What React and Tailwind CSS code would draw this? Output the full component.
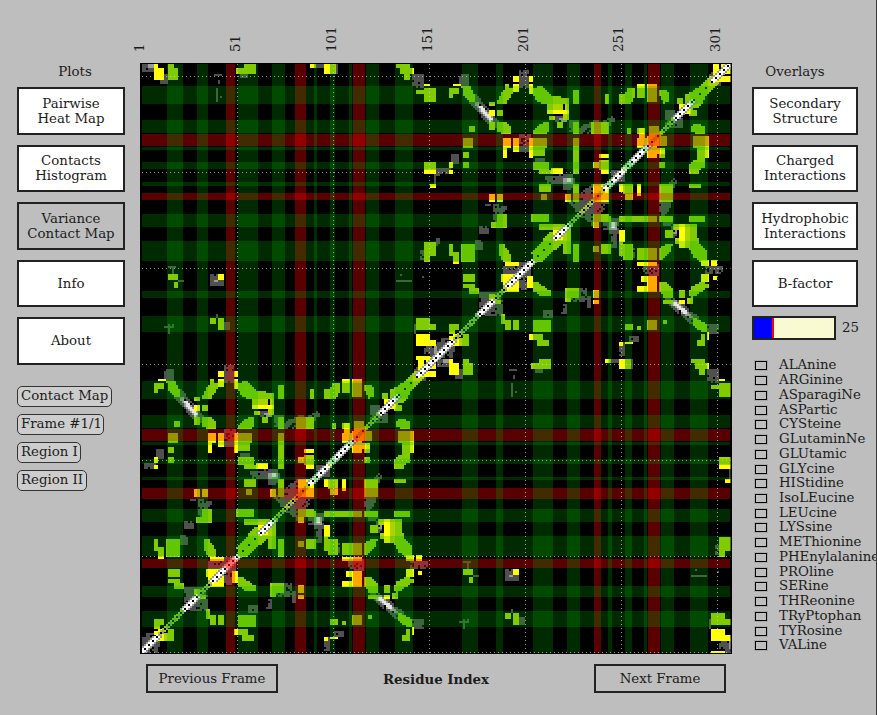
import React from "react";

const CELL = 6;
const G = "#aad400", Y = "#ffff00", D = "#505050", L = "#9a9a9a", W = "#e4e4e4";

function hash(i, j) {
  const s = Math.sin(i * 12.9898 + j * 78.233) * 43758.5453;
  return s - Math.floor(s);
}
function inside(pts, x, y) {
  let c = false;
  for (let a = 0, b = pts.length - 2; a < pts.length; b = a, a += 2) {
    const xa = pts[a], ya = pts[a + 1], xb = pts[b], yb = pts[b + 1];
    if (ya > y !== yb > y && x < ((xb - xa) * (y - ya)) / (yb - ya) + xa) c = !c;
  }
  return c;
}
const rectPts = (r) => [r[0], r[1], r[2], r[1], r[2], r[3], r[0], r[3]];
const mirrorPts = (p) => {
  const o = [];
  for (let i = 0; i < p.length; i += 2) o.push(897 - p[i + 1], 897 - p[i]);
  return o;
};
function addShape(d, pts, speckle) {
  let x0 = 1e9, y0 = 1e9, x1 = -1e9, y1 = -1e9;
  for (let i = 0; i < pts.length; i += 2) {
    x0 = Math.min(x0, pts[i]); x1 = Math.max(x1, pts[i]);
    y0 = Math.min(y0, pts[i + 1]); y1 = Math.max(y1, pts[i + 1]);
  }
  for (let i = Math.floor(x0 / CELL); i <= x1 / CELL; i++) {
    for (let j = Math.floor(y0 / CELL); j <= y1 / CELL; j++) {
      if (!inside(pts, i * CELL + 3, j * CELL + 3)) continue;
      if (speckle && hash(i, j) < speckle) continue;
      d.push(`M${i * CELL} ${j * CELL}h${CELL}v${CELL}h-${CELL}z`);
    }
  }
}
function build(layers, mirror) {
  return layers.map(([color, shapes, speckle]) => {
    const d = [];
    shapes.forEach((s) => {
      const pts = s.length === 4 ? rectPts(s) : s;
      addShape(d, pts, speckle);
      if (mirror) addShape(d, mirrorPts(pts), speckle);
    });
    return { color, d: d.join("") };
  });
}

const mainLayers = build(
  [
    [D, [
      [75, 45, 105, 80], [105, 105, 125, 105, 190, 180, 190, 205, 170, 205, 105, 130],
      [255, 30, 280, 85], [250, 225, 290, 262], [255, 262, 280, 275], [10, 325, 50, 345], [50, 285, 70, 315],
      [300, 295, 330, 305], [330, 350, 380, 370], [375, 345, 415, 372], [360, 168, 402, 186],
      [420, 220, 445, 195, 480, 180, 500, 185, 530, 170, 545, 180, 520, 200, 470, 225],
      [150, 430, 190, 440], [172, 440, 215, 500], [135, 500, 165, 520], [120, 540, 145, 570],
      [400, 425, 440, 398, 470, 372, 500, 395, 490, 420, 440, 475], [530, 330, 568, 368],
      [205, 618, 250, 640], [215, 612, 290, 660], [130, 695, 175, 745], [160, 700, 200, 725],
      [690, 175, 745, 205], [820, 40, 860, 70], [385, 345, 420, 390], [400, 180, 430, 215],
      [5, 845, 40, 880], [20, 835, 45, 850],
    ], 0.1],
    [L, [[120, 125, 130, 125, 175, 175, 175, 190, 165, 190, 120, 135], [385, 352, 412, 372], [375, 172, 400, 184]], 0.1],
    [W, [[130, 140, 142, 140, 174, 178, 165, 184], [395, 356, 410, 368]], 0],
    [G, [
      [40, 85, 75, 85, 75, 100, 55, 100, 55, 112, 40, 112],
      [80, 80, 105, 80, 120, 110, 120, 125, 105, 125, 85, 105],
      [165, 125, 180, 140], [185, 148, 205, 166],
      [232, 85, 232, 100, 215, 130, 190, 135, 185, 125, 205, 90], [212, 72, 225, 100],
      [290, 85, 318, 78, 350, 105, 385, 112, 385, 135, 335, 135, 310, 125, 292, 105],
      [385, 112, 402, 135], [412, 88, 430, 135], [388, 135, 402, 165], [335, 135, 385, 148],
      [345, 166, 362, 178], [385, 165, 402, 180],
      [185, 185, 215, 185, 230, 205, 230, 225, 205, 225, 185, 210], [165, 185, 178, 210], [105, 198, 118, 215],
      [295, 215, 320, 190, 345, 185, 345, 200, 335, 222, 300, 225], [365, 185, 385, 205], [412, 185, 430, 225],
      [470, 185, 525, 225], [575, 205, 590, 225], [605, 205, 620, 225], [640, 200, 670, 225],
      [510, 100, 525, 135], [555, 135, 555, 105, 570, 100, 578, 85, 600, 85, 600, 110, 585, 135],
      [605, 85, 632, 112], [635, 85, 668, 125],
      [675, 88, 695, 88, 705, 105, 705, 125, 685, 130, 675, 110], [728, 112, 745, 135],
      [748, 135, 752, 105, 785, 85, 830, 45, 845, 52, 790, 110, 770, 135],
      [290, 580, 320, 545, 345, 515, 362, 512, 375, 522, 362, 535, 300, 600],
      [85, 232, 115, 262], [295, 232, 335, 262], [295, 262, 330, 290], [412, 232, 430, 262], [412, 262, 430, 345],
      [85, 278, 100, 292], [85, 305, 103, 325], [295, 305, 345, 330], [310, 330, 350, 345],
      [412, 370, 430, 425], [312, 370, 345, 395], [320, 405, 338, 422], [495, 300, 525, 330],
      [290, 465, 345, 485], [315, 490, 390, 512], [388, 512, 405, 575], [185, 465, 215, 488], [170, 488, 215, 505],
      [80, 550, 118, 605], [40, 555, 55, 590], [55, 575, 75, 605],
      [190, 550, 205, 550, 230, 590, 230, 605, 205, 605, 190, 580],
      [85, 645, 118, 665], [85, 670, 118, 685], [105, 685, 135, 700],
      [472, 465, 525, 485], [480, 490, 495, 505], [500, 550, 525, 585], [475, 560, 493, 575], [780, 232, 825, 262],
      [40, 795, 75, 812], [40, 812, 60, 822], [100, 780, 118, 795], [165, 700, 178, 722],
    ], 0],
    [Y, [
      [55, 72, 78, 80], [165, 148, 178, 166], [235, 48, 250, 65], [232, 72, 252, 98], [280, 48, 297, 66], [280, 75, 297, 100],
      [335, 148, 405, 165], [203, 232, 228, 262], [233, 232, 250, 278], [280, 232, 293, 292], [203, 262, 217, 292],
      [605, 232, 635, 262], [612, 205, 632, 232], [640, 225, 668, 262], [605, 72, 632, 85], [635, 72, 667, 85],
      [45, 305, 53, 325], [40, 330, 52, 345], [490, 280, 525, 293], [475, 305, 495, 325], [500, 330, 525, 345], [350, 325, 385, 345],
      [165, 405, 178, 425], [185, 405, 205, 425], [475, 375, 525, 425], [392, 405, 408, 425],
      [55, 605, 75, 615], [210, 605, 250, 618], [200, 645, 225, 665], [205, 670, 250, 695], [232, 645, 252, 695],
      [832, 6, 850, 35], [858, 20, 888, 40], [858, 6, 875, 18], [832, 48, 888, 65], [733, 130, 750, 150], [355, 512, 372, 540],
      [40, 826, 55, 842], [55, 826, 75, 840],
    ], 0],
  ],
  true
);

const offLayers = build(
  [
    [D, [
      [5, 12, 40, 35], [60, 40, 85, 75], [300, 42, 325, 52], [590, 12, 597, 42], [525, 12, 550, 22],
      [815, 45, 855, 80], [830, 70, 850, 85], [888, 325, 900, 350], [880, 345, 888, 370], [843, 570, 855, 600],
      [888, 535, 900, 560], [225, 45, 245, 50], [235, 60, 240, 75], [228, 82, 235, 125], [240, 110, 255, 114], [250, 98, 255, 103],
      [85, 620, 110, 626], [95, 626, 105, 640], [117, 660, 130, 668], [210, 645, 252, 680],
      [780, 640, 786, 646], [770, 658, 815, 668], [845, 650, 851, 662], [228, 765, 235, 777], [255, 785, 273, 812],
      [70, 800, 105, 806], [85, 790, 91, 820], [95, 790, 105, 796], [820, 790, 830, 820], [870, 855, 900, 900], [850, 858, 870, 885],
    ], 0.05],
    [L, [[25, 12, 40, 22], [222, 660, 234, 668], [880, 860, 897, 880]], 0],
    [G, [
      [85, 12, 105, 22], [85, 22, 117, 40], [85, 45, 117, 62], [290, 25, 310, 42], [310, 12, 348, 42], [525, 12, 531, 25], [570, 12, 590, 42],
      [768, 12, 810, 25], [780, 25, 820, 42], [792, 42, 810, 62], [830, 88, 850, 105], [855, 85, 888, 125],
      [855, 305, 888, 330], [855, 545, 888, 590], [855, 590, 870, 605], [85, 645, 117, 663], [102, 668, 117, 683],
      [210, 777, 228, 795], [234, 777, 252, 812], [830, 777, 850, 812], [855, 777, 870, 812], [870, 795, 888, 812],
    ], 0],
    [Y, [
      [40, 12, 55, 22], [40, 22, 72, 40], [40, 45, 72, 62], [510, 12, 525, 22], [550, 12, 570, 42], [815, 25, 825, 42],
      [855, 70, 872, 80], [855, 330, 888, 345], [873, 370, 888, 385], [234, 645, 252, 663],
      [830, 820, 850, 860], [855, 820, 870, 860], [870, 840, 888, 858], [830, 890, 850, 900], [855, 890, 870, 900],
    ], 0],
  ],
  false
);

const whiteSegments = [[0, 50], [130, 170], [215, 290], [360, 400], [510, 560], [570, 640], [720, 770], [830, 897]];
const paleSegments = [[50, 130], [170, 210], [400, 470], [680, 715]];
const diag = (() => {
  const out = { black: [], white: [], light: [], green: [] };
  const cell = (list, x, y) => list.push(`M${x} ${y}h6v6h-6z`);
  for (let i = 0; i < 149; i++) {
    const x = i * 6, y = 891 - i * 6;
    const white = whiteSegments.some(([a, b]) => x >= a && x < b);
    const pale = paleSegments.some(([a, b]) => x >= a && x < b);
    if (white) {
      cell(i % 2 ? out.white : out.black, x, y);
      cell(out.white, x + 6, y); cell(out.white, x, y - 6);
      cell(out.white, x - 6, y); cell(out.white, x, y + 6);
      cell(out.light, x + 12, y); cell(out.light, x - 12, y);
    } else if (pale) {
      cell(i % 2 ? out.light : out.black, x, y);
      cell(i % 2 ? out.green : out.light, x + 6, y); cell(out.green, x, y - 6);
    } else {
      cell(i % 3 ? out.green : out.black, x, y);
      cell(out.green, x + 6, y); cell(out.green, x, y - 6);
    }
  }
  return { black: out.black.join(""), white: out.white.join(""), light: out.light.join(""), green: out.green.join("") };
})();

const greenBands = [
  [167, 183], [197, 208], [238, 258], [272, 285], [314, 317], [330, 335], [349, 352], [366, 379], [395, 413],
  [462, 478], [496, 503], [533, 553], [567, 580], [608, 612], [625, 632], [644, 647], [661, 674], [690, 708],
];
const redBands = [[226, 235], [295, 306], [353, 365], [594, 601], [648, 660]];
const ticks = [141, 237, 333, 429, 525, 621, 717];
const labels = [["1", 144], ["51", 240], ["101", 336], ["151", 432], ["201", 528], ["251", 623], ["301", 720]];

function Layers({ layers, tx, ty }) {
  return (
    <g transform={`translate(${tx} ${ty}) scale(${1 / 3})`}>
      {layers.map((l) => (
        <path key={l.color} d={l.d} fill={l.color} />
      ))}
    </g>
  );
}
function Diagonal({ tx, ty }) {
  return (
    <g transform={`translate(${tx} ${ty}) scale(${1 / 3})`}>
      <path d={diag.green} fill={G} />
      <path d={diag.light} fill={L} />
      <path d={diag.white} fill="#ffffff" />
      <path d={diag.black} fill="#000000" />
    </g>
  );
}

function HeatMap() {
  return (
    <svg width="612" height="660" viewBox="130 0 612 660" shapeRendering="crispEdges" className="block">
      <defs>
        <clipPath id="plot">
          <rect x="142" y="64" width="588.5" height="589" />
        </clipPath>
      </defs>
      <rect x="140" y="62.5" width="591.5" height="591.5" fill="#000000" />
      <g clipPath="url(#plot)">
        <Layers layers={offLayers} tx={140} ty={60} />
        <Layers layers={offLayers} tx={435} ty={355} />
        <Layers layers={mainLayers} tx={140} ty={355} />
        <Layers layers={mainLayers} tx={435} ty={60} />
        <Diagonal tx={140} ty={355} />
        <Diagonal tx={435} ty={60} />
        {redBands.map(([a, b]) => (
          <g key={a} fill="#ff0000" fillOpacity="0.35">
            <rect x={a} y="64" width={b - a} height="589" />
            <rect x="142" y={794 - b} width="588" height={b - a} />
          </g>
        ))}
        {greenBands.map(([a, b]) => (
          <g key={a} fill="#00b400" fillOpacity="0.24">
            <rect x={a} y="64" width={b - a} height="589" />
            <rect x="142" y={794 - b} width="588" height={b - a} />
          </g>
        ))}
        {ticks.map((t) => (
          <g key={t} stroke="#d8d8d8" strokeOpacity="0.7" strokeWidth="1" strokeDasharray="1 3">
            <line x1={t + 0.5} y1="64" x2={t + 0.5} y2="653" />
            <line x1="142" y1={794 - t - 0.5} x2="731" y2={794 - t - 0.5} />
          </g>
        ))}
      </g>
      {labels.map(([s, x]) => (
        <text
          key={s}
          transform={`translate(${x} 52) rotate(-90)`}
          fontFamily="'DejaVu Serif', serif"
          fontSize="13.33"
          fill="#1c1c1c"
          shapeRendering="auto"
        >
          {s}
        </text>
      ))}
    </svg>
  );
}

function BigButton({ lines, white = true, width = "w-[108px]" }) {
  return (
    <div
      className={`${width} h-[47.5px] shrink-0 flex flex-col items-center justify-center border-2 border-[#222222] leading-[15px] ${
        white ? "bg-white" : "bg-[#bebebe]"
      }`}
    >
      {lines.map((l) => (
        <span key={l}>{l}</span>
      ))}
    </div>
  );
}

function Tag({ children, width }) {
  return (
    <div className={`${width} h-[21px] flex items-center px-[3px] border-[1.5px] border-[#333333] rounded-[5px] bg-[#cdcdcd] whitespace-nowrap`}>
      {children}
    </div>
  );
}

const residues = [
  "ALAnine", "ARGinine", "ASparagiNe", "ASPartic", "CYSteine", "GLutaminNe", "GLUtamic", "GLYcine", "HIStidine", "IsoLEucine",
  "LEUcine", "LYSsine", "METhionine", "PHEnylalanine", "PROline", "SERine", "THReonine", "TRyPtophan", "TYRosine", "VALine",
];

export default function App() {
  return (
    <div className="w-[877px] h-[715px] overflow-hidden flex bg-[#bebebe] border-r border-[#3a3a3a] font-['DejaVu_Serif',serif] text-[13.33px] text-[#1c1c1c]">
      <aside className="w-[130px] shrink-0 pl-[17px] pt-[65px] flex flex-col">
        <div className="w-[116px] h-[14px] leading-[14px] text-center">Plots</div>
        <div className="mt-[8px] flex flex-col gap-[10px]">
          <BigButton lines={["Pairwise", "Heat Map"]} />
          <BigButton lines={["Contacts", "Histogram"]} />
          <BigButton lines={["Variance", "Contact Map"]} white={false} />
          <BigButton lines={["Info"]} />
          <BigButton lines={["About"]} />
        </div>
        <div className="mt-[21px] flex flex-col gap-[7px]">
          <Tag width="w-[95px]">Contact Map</Tag>
          <Tag width="w-[87px]">Frame #1/1</Tag>
          <Tag width="w-[64px]">Region I</Tag>
          <Tag width="w-[70px]">Region II</Tag>
        </div>
      </aside>
      <main className="w-[612px] shrink-0 flex flex-col">
        <HeatMap />
        <div className="mt-[4px] px-[16px] flex justify-between items-center">
          <div className="w-[132px] h-[29px] flex items-center justify-center border-2 border-[#222222]">Previous Frame</div>
          <div className="font-bold mt-[3px]">Residue Index</div>
          <div className="w-[132px] h-[29px] flex items-center justify-center border-2 border-[#222222]">Next Frame</div>
        </div>
      </main>
      <aside className="flex-1 min-w-0 pl-[10px] pt-[65px] flex flex-col">
        <div className="w-[86px] h-[14px] leading-[14px] text-center">Overlays</div>
        <div className="mt-[8px] flex flex-col gap-[10px]">
          <BigButton lines={["Secondary", "Structure"]} width="w-[106px]" />
          <BigButton lines={["Charged", "Interactions"]} width="w-[106px]" />
          <BigButton lines={["Hydrophobic", "Interactions"]} width="w-[106px]" />
          <BigButton lines={["B-factor"]} width="w-[106px]" />
        </div>
        <div className="mt-[9px] flex items-center">
          <div className="w-[84px] h-[24px] flex border-2 border-[#222222] bg-[#fafad2]">
            <div className="w-[20px] bg-[#0000ff] border-r-2 border-[#ff0000]" />
          </div>
          <span className="ml-[6px]">25</span>
        </div>
        <div className="mt-[18px] flex flex-col">
          {residues.map((r) => (
            <div key={r} className="h-[14.74px] flex items-center whitespace-nowrap">
              <span className="ml-[3px] mt-px w-[12px] h-[9px] shrink-0 border-[1.5px] border-black shadow-[0_0_0_1px_#a8a8a8]" />
              <span className="ml-[12px] leading-[14px]">{r}</span>
            </div>
          ))}
        </div>
      </aside>
    </div>
  );
}
